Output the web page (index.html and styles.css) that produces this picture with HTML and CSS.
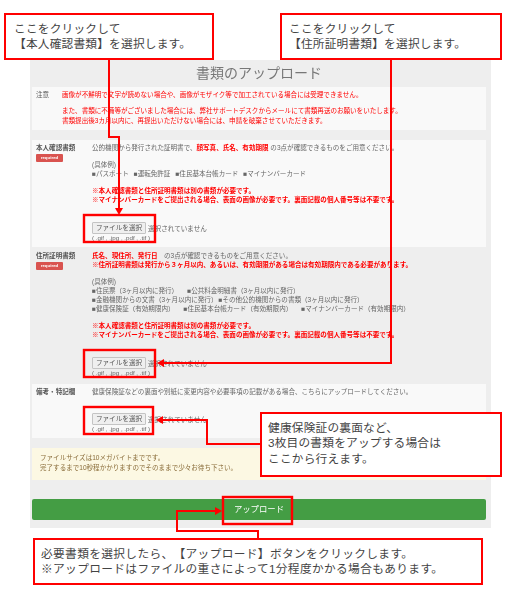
FILE: index.html
```html
<!DOCTYPE html>
<html lang="ja">
<head>
<meta charset="utf-8">
<title>書類のアップロード</title>
<link rel="stylesheet" href="styles.css">
</head>
<body>
<div class="page">
  <main class="panel">
    <h1 class="title">書類のアップロード</h1>

    <section class="row row-note">
      <div class="label plain">注意</div>
      <div class="body note-body">
        <p class="red">画像が不鮮明で文字が読めない場合や、画像がモザイク等で加工されている場合には受理できません。</p>
        <p class="red gap-s">また、書類に不備等がございました場合には、弊社サポートデスクからメールにて書類再送のお願いをいたします。</p>
        <p class="red">書類提出後3カ月以内に、再提出いただけない場合には、申請を破棄させていただきます。</p>
      </div>
    </section>

    <section class="row row-a">
      <div class="label">本人確認書類<span class="badge">required</span></div>
      <div class="body">
        <p>公的機関から発行された証明書で、<b class="red">顔写真、氏名、有効期限</b> の3点が確認できるものをご用意ください。</p>
        <p class="gap">(具体例)</p>
        <p class="spread"><span>■パスポート</span><span>■運転免許証</span><span>■住民基本台帳カード</span><span>■マイナンバーカード</span></p>
        <p class="red strong gap">※本人確認書類と住所証明書類は別の書類が必要です。</p>
        <p class="red strong">※マイナンバーカードをご提出される場合、表面の画像が必要です。裏面記載の個人番号等は不要です。</p>
        <div class="file"><span class="file-btn">ファイルを選択</span><span>選択されていません</span></div>
        <p class="types">( .gif , .jpg , .pdf , .tif )</p>
      </div>
    </section>

    <section class="row row-b">
      <div class="label">住所証明書類<span class="badge">required</span></div>
      <div class="body">
        <p><b class="red">氏名、現住所、発行日</b>　の3点が確認できるものをご用意ください。</p>
        <p class="red strong">※住所証明書類は発行から３ヶ月以内、あるいは、有効期限がある場合は有効期限内である必要があります。</p>
        <p class="gap">(具体例)</p>
        <p class="spread"><span>■住民票（3ヶ月以内に発行）</span><span class="wide">■公共料金明細書（3ヶ月以内に発行）</span></p>
        <p class="spread"><span>■金融機関からの文書（3ヶ月以内に発行）</span><span class="tight">■その他公的機関からの書類（3ヶ月以内に発行）</span></p>
        <p class="spread"><span>■健康保険証（有効期限内）</span><span class="wide">■住民基本台帳カード（有効期限内）</span><span class="wide">■マイナンバーカード（有効期限内）</span></p>
        <p class="red strong gap">※本人確認書類と住所証明書類は別の書類が必要です。</p>
        <p class="red strong">※マイナンバーカードをご提出される場合、表面の画像が必要です。裏面記載の個人番号等は不要です。</p>
        <div class="file"><span class="file-btn">ファイルを選択</span><span>選択されていません</span></div>
        <p class="types">( .gif , .jpg , .pdf , .tif )</p>
      </div>
    </section>

    <section class="row row-c">
      <div class="label">備考・特記欄</div>
      <div class="body">
        <p>健康保険証などの裏面や別紙に変更内容や必要事項の記載がある場合、こちらにアップロードしてください。</p>
        <div class="file"><span class="file-btn">ファイルを選択</span><span>選択されていません</span></div>
        <p class="types">( .gif , .jpg , .pdf , .tif )</p>
      </div>
    </section>

    <div class="notice">
      <p>ファイルサイズは10メガバイトまでです。</p>
      <p>完了するまで10秒程かかりますのでそのままで少々お待ち下さい。</p>
    </div>

    <div class="submit">アップロード</div>
  </main>

  <svg class="overlay" width="518" height="592" viewBox="0 0 518 592" aria-hidden="true">
    <g fill="none" stroke="#f00" stroke-width="2">
      <path d="M109 60V137H119V209"/>
      <path d="M391 60V363H164"/>
      <path d="M260 444H207V420H163"/>
      <path d="M258 538V531H177V511H216"/>
    </g>
    <g fill="#f00">
      <path d="M119 215l-4-7h8z"/>
      <path d="M157 363l7-4v8z"/>
      <path d="M156 420l7-4v8z"/>
      <path d="M222 511l-7-4v8z"/>
    </g>
    <g fill="none" stroke="#f00" stroke-width="2.4">
      <rect x="84" y="215" width="71" height="27"/>
      <rect x="84" y="350" width="71" height="27"/>
      <rect x="84" y="407" width="69" height="27"/>
      <rect x="223" y="497" width="69" height="27"/>
    </g>
  </svg>

  <div class="callout c1">ここをクリックして<br>【本人確認書類】を選択します。</div>
  <div class="callout c2">ここをクリックして<br>【住所証明書類】を選択します。</div>
  <div class="callout c3">健康保険証の裏面など、<br>3枚目の書類をアップする場合は<br>ここから行えます。</div>
  <div class="callout c4">必要書類を選択したら、【アップロード】ボタンをクリックします。<br>※アップロードはファイルの重さによって1分程度かかる場合もあります。</div>
</div>
</body>
</html>
```

FILE: styles.css
```css
* { box-sizing: border-box; }
html, body { margin: 0; padding: 0; background: #fff; }
body {
  font-family: "Liberation Sans", "Noto Sans CJK JP", sans-serif;
  color: #666;
  text-spacing-trim: space-all;
}
p { margin: 0; }

.page { position: relative; width: 518px; height: 592px; overflow: hidden; padding: 60px 27px 0 30px; }

.panel {
  height: 468px;
  background: #eee;
  padding: 0 5px 0 2px;
  font-size: 6.55px;
  line-height: 9px;
  filter: blur(0.25px);
}
.title {
  margin: 0;
  height: 27px;
  font-size: 14px;
  line-height: 27px;
  font-weight: 400;
  text-align: center;
  color: #777;
}

.row { display: flex; }
.label {
  flex: none;
  width: 60px;
  padding-left: 4px;
  font-weight: 700;
  color: #555;
}
.label.plain { width: 30px; font-weight: 400; }
.body { flex: 1; min-width: 0; white-space: nowrap; }
.red { color: #f00; }
.strong, b.red { font-weight: 700; }
.gap { margin-top: 8px; }
.gap-s { margin-top: 6px; }

.row-note { background: #f9f9f9; height: 43px; padding-top: 3px; line-height: 10px; }
.row-a { background: #f9f9f9; height: 107px; margin-top: 10px; padding-top: 3px; }
.row-b { height: 137px; padding-top: 4px; }
.row-c { background: #f9f9f9; height: 54px; padding-top: 3px; }
.row-c .file { margin-top: 17px; }

.badge {
  display: block;
  width: 27px;
  height: 8px;
  margin-top: 2px;
  border-radius: 1px;
  background: #d9534f;
  color: #fff;
  font-size: 4.4px;
  line-height: 8px;
  text-align: center;
}

.spread { display: flex; }
.spread span + span { margin-left: 5px; }
.spread span.wide { margin-left: 9px; }
.spread span.tight { margin-left: 1px; }

.file {
  display: flex;
  align-items: center;
  gap: 2px;
  height: 12px;
  margin-top: 18px;
  font-size: 6.6px;
}
.file-btn {
  display: block;
  width: 54px;
  height: 12px;
  background: #efefef;
  border: 1px solid #c4c4c4;
  border-radius: 1px;
  color: #555;
  line-height: 10px;
  text-align: center;
}
.types { line-height: 8px; font-size: 6.2px; }

.notice {
  height: 32px;
  margin-top: 10px;
  padding: 5px 8px;
  background: #fcf8e3;
  color: #8a6d3b;
  line-height: 10px;
}
.submit {
  height: 21px;
  margin-top: 19px;
  border-radius: 2px;
  background: #449d44;
  color: #fff;
  font-size: 8.4px;
  line-height: 21px;
  text-align: center;
}

.overlay { position: absolute; left: 0; top: 0; }

.callout {
  position: absolute;
  background: #fff;
  border: 2.5px solid #f00;
  color: #444;
  font-size: 11.7px;
  letter-spacing: 0.2px;
  line-height: 15px;
  white-space: nowrap;
}
.c1 { left: 4px; top: 13px; width: 210px; height: 47px; padding: 5.5px 0 0 8px; }
.c2 { left: 280px; top: 13px; width: 222px; height: 47px; padding: 5.5px 0 0 7px; }
.c3 { left: 260px; top: 412px; width: 242px; height: 65px; padding: 5.5px 0 0 6px; line-height: 15.5px; }
.c4 { left: 33px; top: 538px; width: 450px; height: 47px; padding: 6px 0 0 6px; letter-spacing: 0.36px; }
```
